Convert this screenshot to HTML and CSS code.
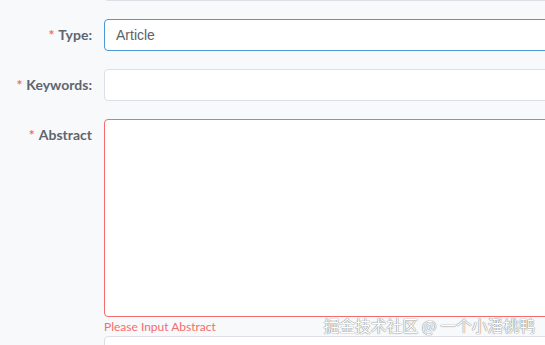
FILE: index.html
```html
<!DOCTYPE html>
<html lang="en">
<head>
  <meta charset="UTF-8" />
  <title>Article Form</title>
  <link rel="stylesheet" href="styles.css">
</head>
<body>

  <form class="form">
    <div class="form-item">
      <label class="label"></label>
      <div class="field"><input class="input" type="text"></div>
    </div>

    <div class="form-item">
      <label class="label required">Type:</label>
      <div class="field"><input class="input focused" type="text" value="Article"></div>
    </div>

    <div class="form-item">
      <label class="label required">Keywords:</label>
      <div class="field"><input class="input" type="text"></div>
    </div>

    <div class="form-item has-error">
      <label class="label required">Abstract</label>
      <div class="field">
        <textarea class="textarea"></textarea>
        <div class="error">Please Input Abstract</div>
      </div>
    </div>

    <div class="form-item">
      <label class="label"></label>
      <div class="field"><input class="input" type="text"></div>
    </div>
  </form>

  <div class="watermark">掘金技术社区 @ 一个小潘桃鸭</div>

</body>
</html>
```

FILE: styles.css
```css
html, body {
  margin: 0;
  height: 100%;
  overflow: hidden;
}
body {
  font-family: Lato, "Noto Sans", sans-serif;
  background-color: #f8f9fb;
  position: relative;
}
.form {
  margin-top: -31px;
}
.form-item {
  display: flex;
  margin-bottom: 18px;
}
.label {
  width: 92px;
  padding-right: 12px;
  text-align: right;
  font-size: 14px;
  font-weight: bold;
  line-height: 32px;
  color: #5f6570;
  flex-shrink: 0;
}
.label.required::before {
  content: "*";
  color: #f56c6c;
  margin-right: 4px;
}
.field {
  width: 600px;
  flex-shrink: 0;
  position: relative;
}
.input, .textarea {
  display: block;
  box-sizing: border-box;
  width: 100%;
  border: 1px solid #dcdfe6;
  border-radius: 4px;
  background-color: #ffffff;
  font-family: "Liberation Sans", Arial, sans-serif;
  font-size: 14px;
  color: #606266;
  outline: none;
}
.input {
  height: 32px;
  padding: 0 11px;
}
.input.focused {
  border-color: #4a98d6;
}
.textarea {
  height: 198px;
  resize: none;
}
.has-error .textarea {
  border-color: #f56c6c;
}
.has-error {
  margin-bottom: 0;
}
.error {
  font-family: Lato, sans-serif;
  font-size: 12px;
  line-height: 18px;
  color: #f56c6c;
  padding-top: 1px;
}
.watermark {
  position: absolute;
  right: 10px;
  bottom: 9px;
  font-family: "Noto Sans CJK SC", sans-serif;
  font-size: 15.8px;
  line-height: 20px;
  color: #ffffff;
  text-shadow: 0 0 1px #666, 0 0 1px #999;
}
```
